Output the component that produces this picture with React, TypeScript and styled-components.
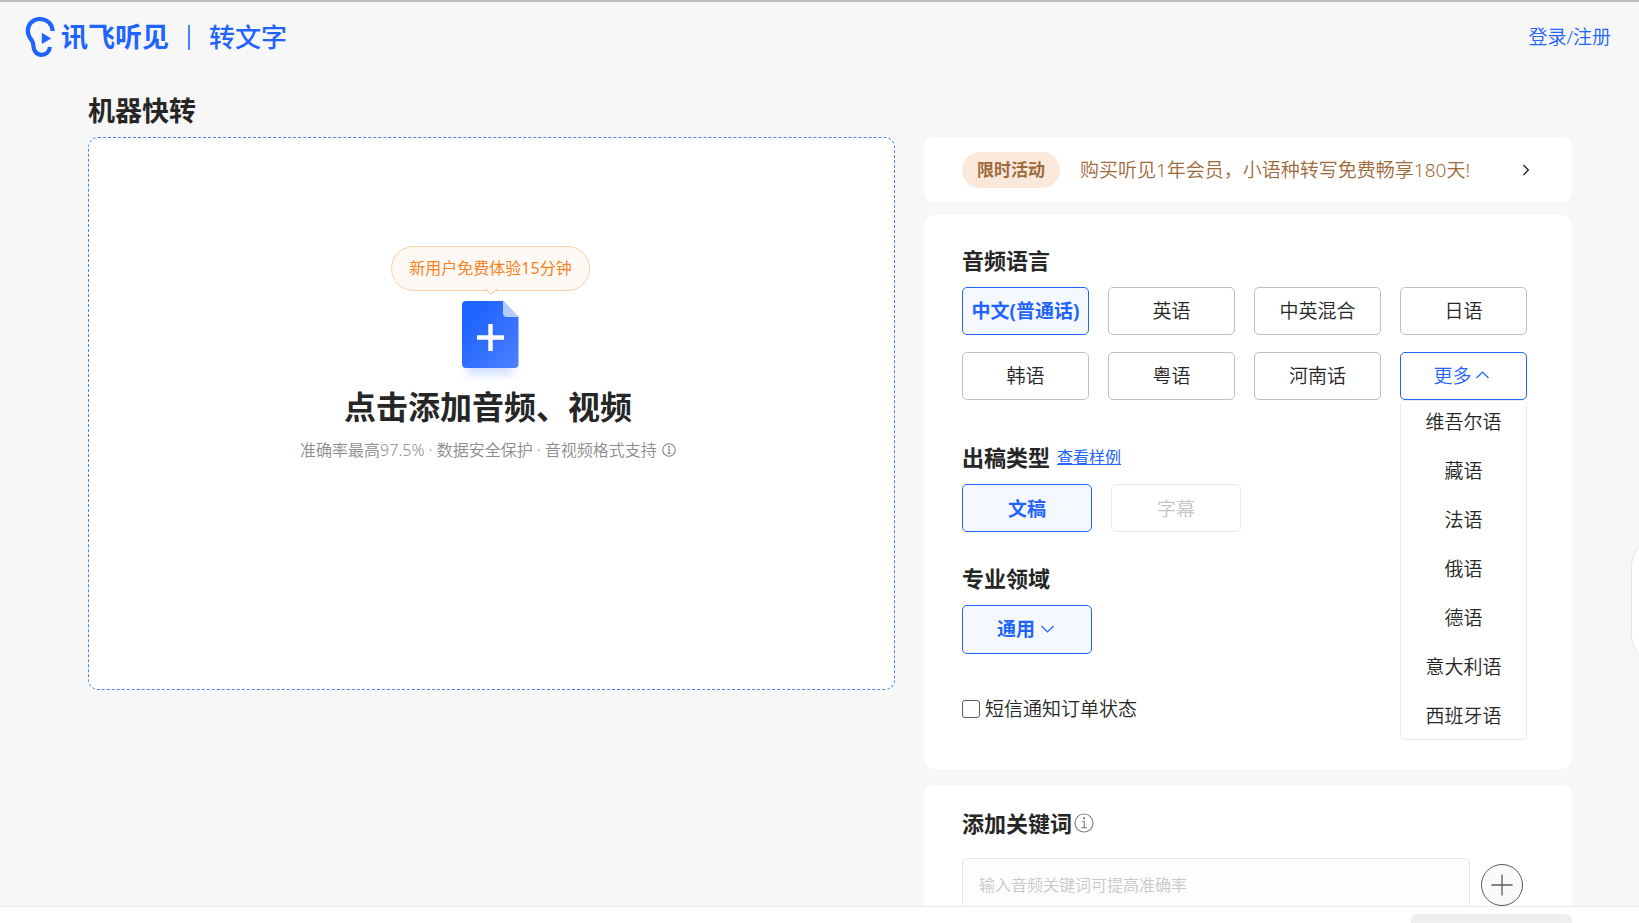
import React, { useState } from 'react';
import styled, { createGlobalStyle, css } from 'styled-components';

const BLUE = '#1f64ff';
const INK = '#262626';
const FONT = '"Noto Sans", "Noto Sans CJK SC", sans-serif';

const GlobalStyle = createGlobalStyle`
  *, *::before, *::after { box-sizing: border-box; }
  body {
    margin: 0;
    background: #f7f7f7;
    color: ${INK};
    font-family: ${FONT};
    font-size: 19px;
    font-weight: 350;
  }
  button, input, select { font: inherit; color: inherit; }
  h1, h2, p, ul { margin: 0; padding: 0; }
`;

const Page = styled.div`
  display: flex;
  flex-direction: column;
  height: 100vh;
  overflow: hidden;
  border-top: 2px solid #bfbfbf;
`;

const Header = styled.header`
  flex: none;
  display: flex;
  align-items: center;
  justify-content: space-between;
  height: 70px;
  padding: 0 28px 0 25px;
`;

const Brand = styled.a`
  display: flex;
  align-items: center;
  color: ${BLUE};
  text-decoration: none;
  line-height: 40px;
`;

const BrandName = styled.span`
  margin-left: 6px;
  font-size: 27px;
  font-weight: 700;
`;

const BrandRule = styled.span`
  width: 2px;
  height: 25px;
  margin: 0 19px;
  background: ${BLUE};
  opacity: 0.8;
`;

const Product = styled.span`
  font-size: 26px;
  font-weight: 500;
`;

const LoginLink = styled.a`
  color: ${BLUE};
  text-decoration: none;
  line-height: 28px;
`;

const Scroller = styled.div`
  flex: 1;
  min-height: 0;
  overflow: hidden;
`;

const PageTitle = styled.h1`
  padding: 19px 88px 6px;
  font-size: 27px;
  font-weight: 700;
  line-height: 40px;
`;

const Columns = styled.main`
  display: grid;
  grid-template-columns: minmax(0, 807fr) minmax(0, 648fr);
  gap: 29px;
  align-items: start;
  padding: 0 67px 0 88px;
`;

const Dropzone = styled.button`
  display: flex;
  flex-direction: column;
  align-items: center;
  justify-content: flex-start;
  height: 553px;
  padding: 108px 22px 0 20px;
  border: 1px dashed #4d82ff;
  border-radius: 10px;
  background: #fff;
  cursor: pointer;
`;

const TrialTip = styled.span`
  position: relative;
  padding: 0 17px;
  border: 1px solid #fbcfa5;
  border-radius: 23px;
  background: #fff9f5;
  color: #f58220;
  font-size: 16px;
  font-weight: 400;
  line-height: 43px;
`;

const TipArrow = styled.svg`
  position: absolute;
  left: 50%;
  top: 100%;
  margin: -1px 0 0 -7px;
`;

const DocIcon = styled.svg`
  margin-top: 10px;
`;

const DropText = styled.span`
  display: flex;
  flex-direction: column;
  align-items: center;
  gap: 7px;
  padding: 2px 5px 0 0;
`;

const DropTitle = styled.span`
  font-size: 32px;
  font-weight: 700;
  line-height: 48px;
`;

const DropHint = styled.span`
  display: flex;
  align-items: center;
  gap: 5px;
  color: #8c8c8c;
  font-size: 16px;
  line-height: 24px;
`;

const Side = styled.div`
  display: flex;
  flex-direction: column;
`;

const Promo = styled.a`
  display: flex;
  align-items: center;
  height: 65px;
  margin-bottom: 13px;
  padding: 0 42px 0 38px;
  border-radius: 10px;
  background: #fff;
  color: #9e6a3c;
  text-decoration: none;
  line-height: 28px;
  white-space: nowrap;
`;

const Badge = styled.span`
  margin-right: 20px;
  padding: 0 15px;
  border-radius: 18px;
  background: #fae8db;
  font-size: 17px;
  font-weight: 700;
  line-height: 36px;
`;

const PromoArrow = styled.svg`
  margin-left: auto;
  color: ${INK};
`;

const Card = styled.section`
  margin-bottom: 16px;
  padding: 29px 45px 0 38px;
  border-radius: 10px;
  background: #fff;
`;

const OptionsCard = styled(Card)`
  padding-bottom: 46px;
`;

const KeywordCard = styled(Card)`
  padding: 22px 49px 40px 38px;
`;

const Heading = styled.div`
  display: flex;
  align-items: center;
  gap: 7px;
  margin-bottom: 11px;
`;

const HeadingText = styled.h2`
  font-size: 22px;
  font-weight: 700;
  line-height: 32px;
`;

const SampleLink = styled.a`
  color: ${BLUE};
  font-size: 16px;
  font-weight: 400;
  line-height: 24px;
`;

const Group = styled.div<{ $compact?: boolean }>`
  margin-bottom: ${({ $compact }) => ($compact ? 30 : 41)}px;
`;

const LanguageGrid = styled.div`
  display: grid;
  grid-template-columns: repeat(4, minmax(0, 1fr));
  gap: 17px 19px;
`;

const TypeRow = styled.div`
  display: flex;
  gap: 19px;
`;

type Tone = 'plain' | 'selected' | 'open';

const tones = {
  plain: css`
    border-color: #bfbfbf;
    background: #fff;
  `,
  selected: css`
    border-color: ${BLUE};
    background: #f5f9ff;
    color: ${BLUE};
    font-weight: 700;
  `,
  open: css`
    border-color: ${BLUE};
    background: #fff;
    color: ${BLUE};
  `,
};

const Option = styled.button<{ $tone?: Tone }>`
  display: flex;
  align-items: center;
  justify-content: center;
  gap: 4px;
  width: 100%;
  height: 48px;
  padding: 0 0 2px;
  border: 1px solid;
  border-radius: 5px;
  white-space: nowrap;
  cursor: pointer;
  ${({ $tone = 'plain' }) => tones[$tone]}

  &:disabled {
    border-color: #ebebeb;
    color: #c4c4c4;
    cursor: not-allowed;
  }
`;

const TypeOption = styled(Option)`
  width: 130px;
  padding: 0;
`;

const MoreOption = styled(Option)`
  padding-right: 5px;
`;

const MoreWrap = styled.div`
  position: relative;
`;

const Menu = styled.ul`
  position: absolute;
  top: 100%;
  left: 0;
  right: 0;
  z-index: 1;
  display: flex;
  flex-direction: column;
  gap: 8px;
  padding-bottom: 3px;
  border: 1px solid #ebebeb;
  border-radius: 5px;
  background: #fff;
  list-style: none;
`;

const MenuItem = styled.button`
  display: block;
  width: 100%;
  height: 41px;
  padding: 0;
  border: 0;
  background: none;
  line-height: 40px;
  cursor: pointer;
`;

const SelectWrap = styled.div`
  position: relative;
  width: 130px;
`;

const FieldSelect = styled.select`
  display: block;
  width: 100%;
  height: 49px;
  padding: 0 0 1px 34px;
  border: 1px solid;
  border-radius: 5px;
  appearance: none;
  ${tones.selected}
`;

const SelectArrow = styled.svg`
  position: absolute;
  top: 20px;
  right: 38px;
  color: ${BLUE};
  pointer-events: none;
`;

const NoticeLabel = styled.label`
  display: flex;
  align-items: center;
  gap: 5px;
  line-height: 28px;
`;

const Checkbox = styled.input`
  width: 18px;
  height: 18px;
  margin: 0;
  border: 1px solid #5c5c5c;
  border-radius: 3px;
  appearance: none;
  background: #fff;

  &:checked { background: ${BLUE}; }
`;

const KeywordHeading = styled(Heading)`
  gap: 2px;
  margin-bottom: 19px;
`;

const KeywordRow = styled.div`
  display: flex;
  align-items: center;
  gap: 11px;
`;

const KeywordInput = styled.input`
  flex: 1;
  min-width: 0;
  height: 54px;
  padding: 0 16px;
  border: 1px solid #e6e6e6;
  border-radius: 5px;
  background: #fdfdfd;
  font-size: 16px;

  &::placeholder { color: #c8c8c8; opacity: 1; }
`;

const AddButton = styled.button`
  display: flex;
  align-items: center;
  justify-content: center;
  width: 42px;
  height: 42px;
  padding: 0;
  border: 1px solid #5c5c5c;
  border-radius: 50%;
  background: #fafafa;
  color: #5c5c5c;
`;

const Footer = styled.footer`
  flex: none;
  display: flex;
  justify-content: flex-end;
  height: 17px;
  padding: 7px 67px 0;
  border-top: 1px solid #e8e8e8;
  background: #fff;
`;

const SubmitButton = styled.button`
  flex: none;
  width: 161px;
  height: 48px;
  border: 0;
  border-radius: 6px;
  background: #efefef;
`;

const SideTab = styled.button`
  position: fixed;
  right: -52px;
  bottom: 258px;
  width: 60px;
  height: 128px;
  border: 1px solid #e6e6e6;
  border-radius: 30px;
  background: #fff;
`;

function BrandMark() {
  return (
    <svg width="30" height="40" viewBox="0 0 30 40" fill="none" aria-hidden="true">
      <path
        d="M27.6 14C27.4 6.8 21.8 2 14.8 2C7.6 2 2.8 7.2 2.8 14C2.8 18.4 4.6 20.6 6.7 23.3C9 26.5 8 29 9 32C10.2 35.7 12.6 37.8 16.4 37.8C21 37.8 24.6 35 24.9 30"
        stroke={BLUE}
        strokeWidth="4.2"
      />
      <path d="M16.8 15.8L26.2 21.4L16.8 27Z" fill={BLUE} />
    </svg>
  );
}

function FileIcon() {
  return (
    <DocIcon width="97" height="80" viewBox="0 0 97 80" aria-hidden="true">
      <defs>
        <linearGradient id="sheet" x1="0" y1="0" x2="1" y2="1">
          <stop offset="0.2" stopColor="#1f64ff" />
          <stop offset="1" stopColor="#4d80ff" />
        </linearGradient>
        <filter id="glow" x="-30%" y="-30%" width="160%" height="160%">
          <feGaussianBlur stdDeviation="5" />
        </filter>
      </defs>
      <rect x="25" y="24" width="46" height="50" fill="#1f64ff" opacity="0.2" filter="url(#glow)" />
      <path d="M24 0H61L76.5 16V63a4 4 0 0 1-4 4H24a4 4 0 0 1-4-4V4a4 4 0 0 1 4-4Z" fill="url(#sheet)" />
      <path d="M61 0L76.5 16H65a4 4 0 0 1-4-4Z" fill="#b6ccff" />
      <path d="M48.5 23v27M35 36.5h27" stroke="#fff" strokeWidth="4.4" />
    </DocIcon>
  );
}

function InfoIcon({ size }: { size: number }) {
  return (
    <svg width={size} height={size} viewBox="0 0 20 20" fill="none" stroke="#858585" strokeWidth={size > 16 ? 1.2 : 1.6} aria-hidden="true">
      <circle cx="10" cy="10" r="9" />
      <path d="M8 8.5h2.3v6M7.5 14.7h5.4" />
      <circle cx="10" cy="5.3" r="0.6" fill="#858585" />
    </svg>
  );
}

const languages = ['中文(普通话)', '英语', '中英混合', '日语', '韩语', '粤语', '河南话'];
const moreLanguages = ['维吾尔语', '藏语', '法语', '俄语', '德语', '意大利语', '西班牙语'];

export default function App() {
  const [language, setLanguage] = useState(languages[0]);
  const [open, setOpen] = useState(true);

  return (
    <>
      <GlobalStyle />
      <Page>
        <Header>
          <Brand href="#">
            <BrandMark />
            <BrandName>讯飞听见</BrandName>
            <BrandRule />
            <Product>转文字</Product>
          </Brand>
          <LoginLink href="#login">登录/注册</LoginLink>
        </Header>

        <Scroller>
          <PageTitle>机器快转</PageTitle>
          <Columns>
            <Dropzone type="button">
              <TrialTip>
                新用户免费体验15分钟
                <TipArrow width="14" height="6" viewBox="0 0 14 6" aria-hidden="true">
                  <path d="M1 0L7 5L13 0" fill="#fff9f5" stroke="#f8b984" />
                </TipArrow>
              </TrialTip>
              <FileIcon />
              <DropText>
                <DropTitle>点击添加音频、视频</DropTitle>
                <DropHint>
                  准确率最高97.5% · 数据安全保护 · 音视频格式支持
                  <InfoIcon size={14} />
                </DropHint>
              </DropText>
            </Dropzone>

            <Side>
              <Promo href="#promo">
                <Badge>限时活动</Badge>
                购买听见1年会员，小语种转写免费畅享180天!
                <PromoArrow width="8" height="12" viewBox="0 0 8 12" fill="none" stroke="currentColor" strokeWidth="1.4" aria-hidden="true">
                  <path d="M1.5 1L6.3 6L1.5 11" />
                </PromoArrow>
              </Promo>

              <OptionsCard>
                <Group>
                  <Heading>
                    <HeadingText>音频语言</HeadingText>
                  </Heading>
                  <LanguageGrid>
                    {languages.map((name) => (
                      <Option
                        key={name}
                        type="button"
                        $tone={name === language ? 'selected' : 'plain'}
                        onClick={() => setLanguage(name)}
                      >
                        {name}
                      </Option>
                    ))}
                    <MoreWrap>
                      <MoreOption type="button" $tone="open" aria-expanded={open} onClick={() => setOpen(!open)}>
                        更多
                        <svg width="13" height="8" viewBox="0 0 13 8" fill="none" stroke="currentColor" strokeWidth="1.2" aria-hidden="true">
                          <path d="M0.5 7L6.5 1L12.5 7" />
                        </svg>
                      </MoreOption>
                      {open && (
                        <Menu>
                          {moreLanguages.map((name) => (
                            <li key={name}>
                              <MenuItem type="button" onClick={() => setLanguage(name)}>{name}</MenuItem>
                            </li>
                          ))}
                        </Menu>
                      )}
                    </MoreWrap>
                  </LanguageGrid>
                </Group>

                <Group $compact>
                  <Heading>
                    <HeadingText>出稿类型</HeadingText>
                    <SampleLink href="#sample">查看样例</SampleLink>
                  </Heading>
                  <TypeRow>
                    <TypeOption type="button" $tone="selected">文稿</TypeOption>
                    <TypeOption type="button" disabled>字幕</TypeOption>
                  </TypeRow>
                </Group>

                <Group>
                  <Heading>
                    <HeadingText as="label" htmlFor="field">专业领域</HeadingText>
                  </Heading>
                  <SelectWrap>
                    <FieldSelect id="field" defaultValue="通用">
                      <option>通用</option>
                    </FieldSelect>
                    <SelectArrow width="13" height="8" viewBox="0 0 13 8" fill="none" stroke="currentColor" strokeWidth="1.2" aria-hidden="true">
                      <path d="M0.5 1L6.5 7L12.5 1" />
                    </SelectArrow>
                  </SelectWrap>
                </Group>

                <NoticeLabel>
                  <Checkbox type="checkbox" />
                  短信通知订单状态
                </NoticeLabel>
              </OptionsCard>

              <KeywordCard>
                <KeywordHeading>
                  <HeadingText as="label" htmlFor="keywords">添加关键词</HeadingText>
                  <InfoIcon size={20} />
                </KeywordHeading>
                <KeywordRow>
                  <KeywordInput id="keywords" placeholder="输入音频关键词可提高准确率" />
                  <AddButton type="button" aria-label="添加">
                    <svg width="22" height="22" viewBox="0 0 22 22" stroke="currentColor" strokeWidth="1.3" aria-hidden="true">
                      <path d="M11 0.5v21M0.5 11h21" />
                    </svg>
                  </AddButton>
                </KeywordRow>
              </KeywordCard>
            </Side>
          </Columns>
        </Scroller>

        <Footer>
          <SubmitButton type="button" aria-label="提交" />
        </Footer>
        <SideTab type="button" aria-label="侧边栏" />
      </Page>
    </>
  );
}
